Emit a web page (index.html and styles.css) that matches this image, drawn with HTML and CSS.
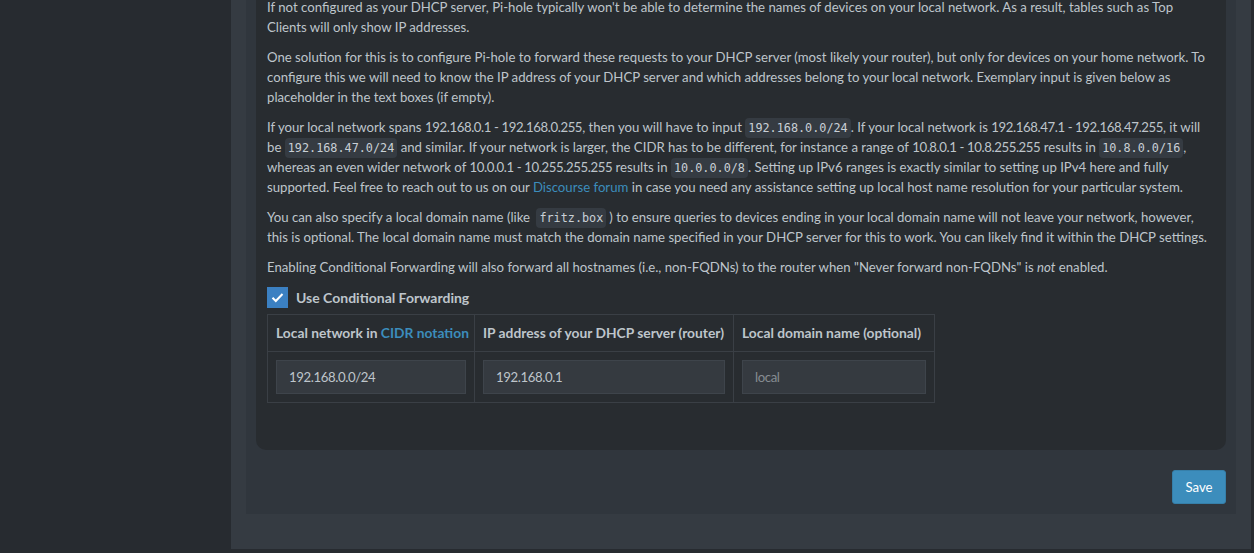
FILE: index.html
```html
<!DOCTYPE html>
<html lang="en">

<head>
    <meta charset="UTF-8">
    <meta name="viewport" content="width=device-width, initial-scale=1.0">
    <title>Pi-hole - DNS settings</title>
    <link rel="stylesheet" href="styles.css">
</head>

<body>

    <aside class="sidebar"></aside>

    <div class="content-wrapper">
        <div class="tab-pane">
            <div class="box">
                <p>If not configured as your DHCP server, Pi-hole typically won't be able to determine the names of devices on your local network. As a result, tables such as Top Clients will only show IP addresses.</p>
                <p>One solution for this is to configure Pi-hole to forward these requests to your DHCP server (most likely your router), but only for devices on your home network. To configure this we will need to know the IP address of your DHCP server and which addresses belong to your local network. Exemplary input is given below as placeholder in the text boxes (if empty).</p>
                <p>If your local network spans <span class="range">192.168.0.1 - 192.168.0.255</span>, then you will have to input <code>192.168.0.0/24</code>. If your local network is <span class="range">192.168.47.1 - 192.168.47.255</span>, it will be <code>192.168.47.0/24</code> and similar. If your network is larger, the CIDR has to be different, for instance a range of <span class="range">10.8.0.1 - 10.8.255.255</span> results in <code>10.8.0.0/16</code>, whereas an even wider network of <span class="range">10.0.0.1 - 10.255.255.255</span> results in <code>10.0.0.0/8</code>. Setting up IPv6 ranges is exactly similar to setting up IPv4 here and fully supported. Feel free to reach out to us on our <a href="#">Discourse forum</a> in case you need any assistance setting up local host name resolution for your particular system.</p>
                <p class="domain-note">You can also specify a local domain name (like <code>fritz.box</code>) to ensure queries to devices ending in your local domain name will not leave your network, however, this is optional. The local domain name must match the domain name specified in your DHCP server for this to work. You can likely find it within the DHCP settings.</p>
                <p>Enabling Conditional Forwarding will also forward all hostnames (i.e., non-FQDNs) to the router when "Never forward non-FQDNs" is <em>not</em> enabled.</p>

                <label class="check">
                    <span class="check-box">
                        <svg width="13" height="11" viewBox="0 0 13 11">
                            <path d="M1.5 5.8 L4.8 9 L11.5 2" fill="none" stroke="#fff" stroke-width="2" />
                        </svg>
                    </span>
                    Use Conditional Forwarding
                </label>

                <table class="rev-table">
                    <colgroup>
                        <col class="col-net">
                        <col class="col-ip">
                        <col class="col-domain">
                    </colgroup>
                    <thead>
                        <tr>
                            <th>Local network in <a href="#">CIDR notation</a></th>
                            <th>IP address of your DHCP server (router)</th>
                            <th>Local domain name (optional)</th>
                        </tr>
                    </thead>
                    <tbody>
                        <tr>
                            <td><input type="text" value="192.168.0.0/24"></td>
                            <td><input type="text" value="192.168.0.1"></td>
                            <td><input type="text" placeholder="local"></td>
                        </tr>
                    </tbody>
                </table>
            </div>

            <div class="box-footer">
                <button class="btn-save">Save</button>
            </div>
        </div>
    </div>

</body>

</html>
```

FILE: styles.css
```css
body {
    margin: 0;
    background-color: #272b30;
    color: #bec5cb;
    font-family: Lato, "Open Sans", sans-serif;
    font-size: 13.2px;
    line-height: 20px;
    display: flex;
    align-items: flex-start;
    min-height: 553px;
}

.sidebar {
    width: 231px;
    flex-shrink: 0;
}

.content-wrapper {
    width: 1020px;
    background-color: #353b42;
    padding: 0 15px 35px;
    box-sizing: border-box;
}

.tab-pane {
    margin-top: -23px;
    padding: 10px;
    background-color: #30363d;
}

.box {
    padding: 10px 11px 10px;
    background-color: #282c30;
    border-radius: 0 0 10px 10px;
}

p {
    margin: 0 0 10px;
}

a {
    color: #3c8dbc;
    text-decoration: none;
}

/* address ranges: digits run a bit tighter */
.range {
    letter-spacing: -0.4px;
}

code {
    font-family: "DejaVu Sans Mono", monospace;
    font-size: 11.8px;
    line-height: 1;
    padding: 3px 3px;
    background-color: #353b42;
    border-radius: 4px;
    color: #c9d0d6;
}

.domain-note code {
    margin: 0 3px;
}

/* checkbox with label */
.check {
    display: flex;
    align-items: center;
    gap: 8px;
    height: 21px;
    font-size: 14px;
    font-weight: bold;
    margin-bottom: 6px;
}

.check-box {
    width: 21px;
    height: 21px;
    background-color: #3b80c2;
    display: flex;
    align-items: center;
    justify-content: center;
}

.rev-table {
    border-collapse: collapse;
    table-layout: fixed;
    width: 667px;
    margin-bottom: 37px;
}

.col-net {
    width: 207px;
}

.col-ip {
    width: 259px;
}

.col-domain {
    width: 201px;
}

.rev-table th,
.rev-table td {
    border: 1px solid #3a3f45;
    padding: 8px;
    text-align: left;
}

.rev-table th {
    font-size: 13.8px;
    font-weight: bold;
    line-height: 20px;
    white-space: nowrap;
}

.rev-table input {
    display: block;
    width: 100%;
    height: 34px;
    box-sizing: border-box;
    padding: 6px 12px;
    background-color: #353a40;
    border: 1px solid #3e444b;
    color: #bec5cb;
    font-family: Lato, sans-serif;
    font-size: 13.2px;
    letter-spacing: -0.4px;
}

.rev-table input::placeholder {
    color: #868c92;
}

.box-footer {
    display: flex;
    justify-content: flex-end;
    padding-top: 20px;
}

.btn-save {
    width: 54px;
    height: 34px;
    background-color: #3c8dbc;
    border: 1px solid #367fa9;
    border-radius: 3px;
    color: #fff;
    font-family: Lato, sans-serif;
    font-size: 13.2px;
    cursor: pointer;
}
```
